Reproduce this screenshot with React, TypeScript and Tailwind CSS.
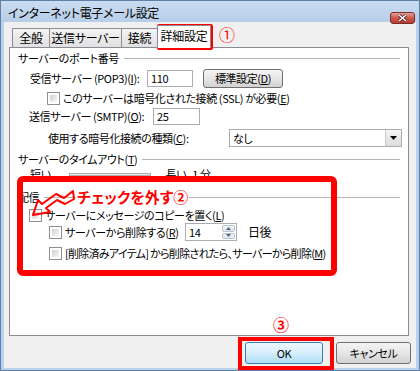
import React from 'react';

const jp = "font-['Noto_Sans_CJK_JP','Noto_Sans',sans-serif] [font-feature-settings:'palt']";

function Box() {
  return (
    <span className="block w-[13px] h-[13px] shrink-0 border border-[#8e8f8f] bg-white p-[2px]">
      <span className="block w-full h-full bg-gradient-to-br from-[#cfd2d6] to-[#f7f7f7]" />
    </span>
  );
}

function GroupLabel({ children, className = '' }: { children: React.ReactNode; className?: string }) {
  return (
    <div className={`flex items-center h-[14px] pl-[8px] pr-[8px] ${className}`}>
      <span className="whitespace-nowrap leading-none">{children}</span>
      <span className="flex-1 h-px bg-[#b5b5b5] ml-[5px]" />
    </div>
  );
}

function WinButton({ children, primary, className = '' }: { children: React.ReactNode; primary?: boolean; className?: string }) {
  return (
    <div
      className={`shrink-0 flex items-center justify-center rounded-[3px] border leading-none ${
        primary
          ? 'border-[#3c7fb1] bg-gradient-to-b from-[#edf7fd] via-[#d6eefc] to-[#aedcf6]'
          : 'border-[#707070] bg-gradient-to-b from-[#f4f4f4] via-[#e6e6e6] to-[#d2d2d2]'
      } ${className}`}
    >
      {children}
    </div>
  );
}

export default function App() {
  return (
    <div className={`relative w-[420px] h-[371px] text-[11px] tracking-[-0.4px] text-black ${jp}`}>
      <div className="w-full h-full flex flex-col border border-[#5f7fa6] bg-[#b9d1ea]">
        {/* Title bar */}
        <div className="relative h-[21px] shrink-0 bg-gradient-to-b from-[#cadcf0] to-[#b7cee8] pl-[7px] pt-[4px]">
          <span className="text-[12px] tracking-[-0.3px] leading-none">インターネット電子メール設定</span>
          <div className="absolute right-[4px] top-[11px] w-[25px] h-[12px] rounded-[3px] border border-[#7a2b2b] bg-gradient-to-b from-[#e4a195] via-[#c9594b] to-[#b83c30] flex items-center justify-center">
            <svg width="9" height="8" viewBox="0 0 9 8">
              <path d="M1 1 L8 7 M8 1 L1 7" stroke="#5a1e1e" strokeWidth="3" />
              <path d="M1 1 L8 7 M8 1 L1 7" stroke="#ffffff" strokeWidth="1.6" />
            </svg>
          </div>
        </div>

        {/* Body */}
        <div className="flex-1 flex flex-col bg-[#f0f0f0] mx-[3px] mb-[2px]">
          {/* Tabs */}
          <div className="flex items-end h-[25px] pl-[8px] shrink-0 text-[12px] tracking-[-0.3px]">
            <div className="w-[38px] h-[19px] border border-b-0 border-[#898c95] bg-gradient-to-b from-[#f3f3f3] to-[#e1e1e1] flex items-center justify-center">全般</div>
            <div className="-ml-px w-[73px] h-[19px] border border-b-0 border-[#898c95] bg-gradient-to-b from-[#f3f3f3] to-[#e1e1e1] flex items-center justify-center">送信サーバー</div>
            <div className="-ml-px w-[37px] h-[19px] border border-b-0 border-[#898c95] bg-gradient-to-b from-[#f3f3f3] to-[#e1e1e1] flex items-center justify-center">接続</div>
            <div className="relative z-10 -ml-px -mb-px w-[54px] h-[23px] border border-b-0 border-[#898c95] bg-white flex items-center justify-center pb-[2px]">詳細設定</div>
          </div>

          {/* Panel */}
          <div className="ml-[5px] mr-[7px] h-[289px] shrink-0 border border-[#898c95] bg-white flex flex-col">
            <GroupLabel className="mt-[3px]">サーバーのポート番号</GroupLabel>

            <div className="flex items-center mt-[4px] h-[19px] pl-[20px]">
              <span className="w-[117px] shrink-0 whitespace-nowrap">受信サーバー (POP3)(<u>I</u>):</span>
              <div className="w-[46px] h-[17px] shrink-0 border border-[#abadb3] flex items-center pl-[3px]">110</div>
              <WinButton className="ml-[10px] w-[80px] h-[19px]">標準設定(<u>D</u>)</WinButton>
            </div>

            <div className="flex items-center mt-[4px] h-[13px] pl-[37px]">
              <Box />
              <span className="ml-[3px] whitespace-nowrap">このサーバーは暗号化された接続 (SSL) が必要(<u>E</u>)</span>
            </div>

            <div className="flex items-center mt-[3px] h-[17px] pl-[19px]">
              <span className="w-[124px] shrink-0 whitespace-nowrap">送信サーバー (SMTP)(<u>O</u>):</span>
              <div className="w-[47px] h-[17px] shrink-0 border border-[#abadb3] flex items-center pl-[3px]">25</div>
            </div>

            <div className="flex items-center mt-[4px] h-[18px] pl-[38px]">
              <span className="w-[181px] shrink-0 whitespace-nowrap">使用する暗号化接続の種類(<u>C</u>):</span>
              <div className="w-[173px] h-[18px] shrink-0 border border-[#abadb3] flex items-center">
                <span className="flex-1 pl-[3px]">なし</span>
                <div className="w-[16px] h-[16px] border-l border-[#c9c9c9] bg-gradient-to-b from-[#f5f5f5] to-[#dcdcdc] flex items-center justify-center">
                  <svg width="7" height="4" viewBox="0 0 7 4"><path d="M0 0 H7 L3.5 4 Z" fill="#000" /></svg>
                </div>
              </div>
            </div>

            <GroupLabel className="mt-[5px]">サーバーのタイムアウト(<u>T</u>)</GroupLabel>

            <div className="flex items-center mt-px h-[14px] pl-[20px] leading-none">
              <span>短い</span>
              <div className="ml-[18px] w-[82px] h-[3px] border border-[#b0b0b0] bg-[#e7eaea]" />
              <span className="ml-[15px]">長い</span>
              <span className="ml-[6px]">1 分</span>
            </div>

            <GroupLabel className="mt-[9px]">配信</GroupLabel>

            <div className="flex items-center mt-[5px] h-[13px] pl-[19px]">
              <Box />
              <span className="ml-[3px] whitespace-nowrap">サーバーにメッセージのコピーを置く(<u>L</u>)</span>
            </div>

            <div className="flex items-center mt-px h-[18px] pl-[39px]">
              <div className="w-[136px] shrink-0 flex items-center">
                <Box />
                <span className="ml-[3px] whitespace-nowrap">サーバーから削除する(<u>R</u>)</span>
              </div>
              <div className="w-[52px] h-[18px] shrink-0 border border-[#abadb3] flex items-center">
                <span className="flex-1 pl-[3px]">14</span>
                <div className="w-[15px] h-full flex flex-col gap-px p-px">
                  <div className="flex-1 rounded-[2px] border border-[#b8c4d0] bg-gradient-to-b from-[#f4f6f8] to-[#dfe5ec] flex items-center justify-center">
                    <svg width="5" height="3" viewBox="0 0 5 3"><path d="M0 3 H5 L2.5 0 Z" fill="#4d6185" /></svg>
                  </div>
                  <div className="flex-1 rounded-[2px] border border-[#b8c4d0] bg-gradient-to-b from-[#f4f6f8] to-[#dfe5ec] flex items-center justify-center">
                    <svg width="5" height="3" viewBox="0 0 5 3"><path d="M0 0 H5 L2.5 3 Z" fill="#4d6185" /></svg>
                  </div>
                </div>
              </div>
              <span className="ml-[11px] text-[12px]">日後</span>
            </div>

            <div className="flex items-center mt-[6px] h-[13px] pl-[39px]">
              <Box />
              <span className="ml-[3px] whitespace-nowrap tracking-[-0.7px]">[削除済みアイテム] から削除されたら、サーバーから削除(<u>M</u>)</span>
            </div>
          </div>

          {/* Buttons */}
          <div className="flex justify-end gap-[13px] mt-[6px] mr-[5px] h-[22px]">
            <WinButton primary className="w-[78px] h-[22px]">OK</WinButton>
            <WinButton className="w-[75px] h-[22px]">キャンセル</WinButton>
          </div>
        </div>
      </div>

      {/* Annotations */}
      <div className="absolute left-[157px] top-[24px] w-[56px] h-[26px] border-[4px] border-[#ff0000] rounded-[2px]" />
      <span className="absolute left-[219px] top-[26px] text-[16px] tracking-normal leading-none text-[#ff0000]">①</span>

      <div className="absolute left-[17px] top-[176px] w-[320px] h-[100px] border-[6px] border-[#ff0000] rounded-[6px]" />
      <span className="absolute left-[76px] top-[189px] px-[1px] bg-white text-[15px] tracking-normal font-bold leading-none text-[#ff0000]">チェックを外す②</span>
      <svg className="absolute left-0 top-0 pointer-events-none" width="420" height="371">
        <path d="M33 215 L38 200 L42 204 L56 194 L64 198 L73 191 L74 199 L65 204 L57 200 L46 208 L50 212 Z" fill="none" stroke="#ff0000" strokeWidth="2" strokeLinejoin="round" />
      </svg>

      <span className="absolute left-[273px] top-[316px] text-[16px] tracking-normal font-bold leading-none text-[#ff0000]">③</span>
      <div className="absolute left-[238px] top-[337px] w-[96px] h-[33px] border-[4px] border-[#ff0000]" />
    </div>
  );
}
